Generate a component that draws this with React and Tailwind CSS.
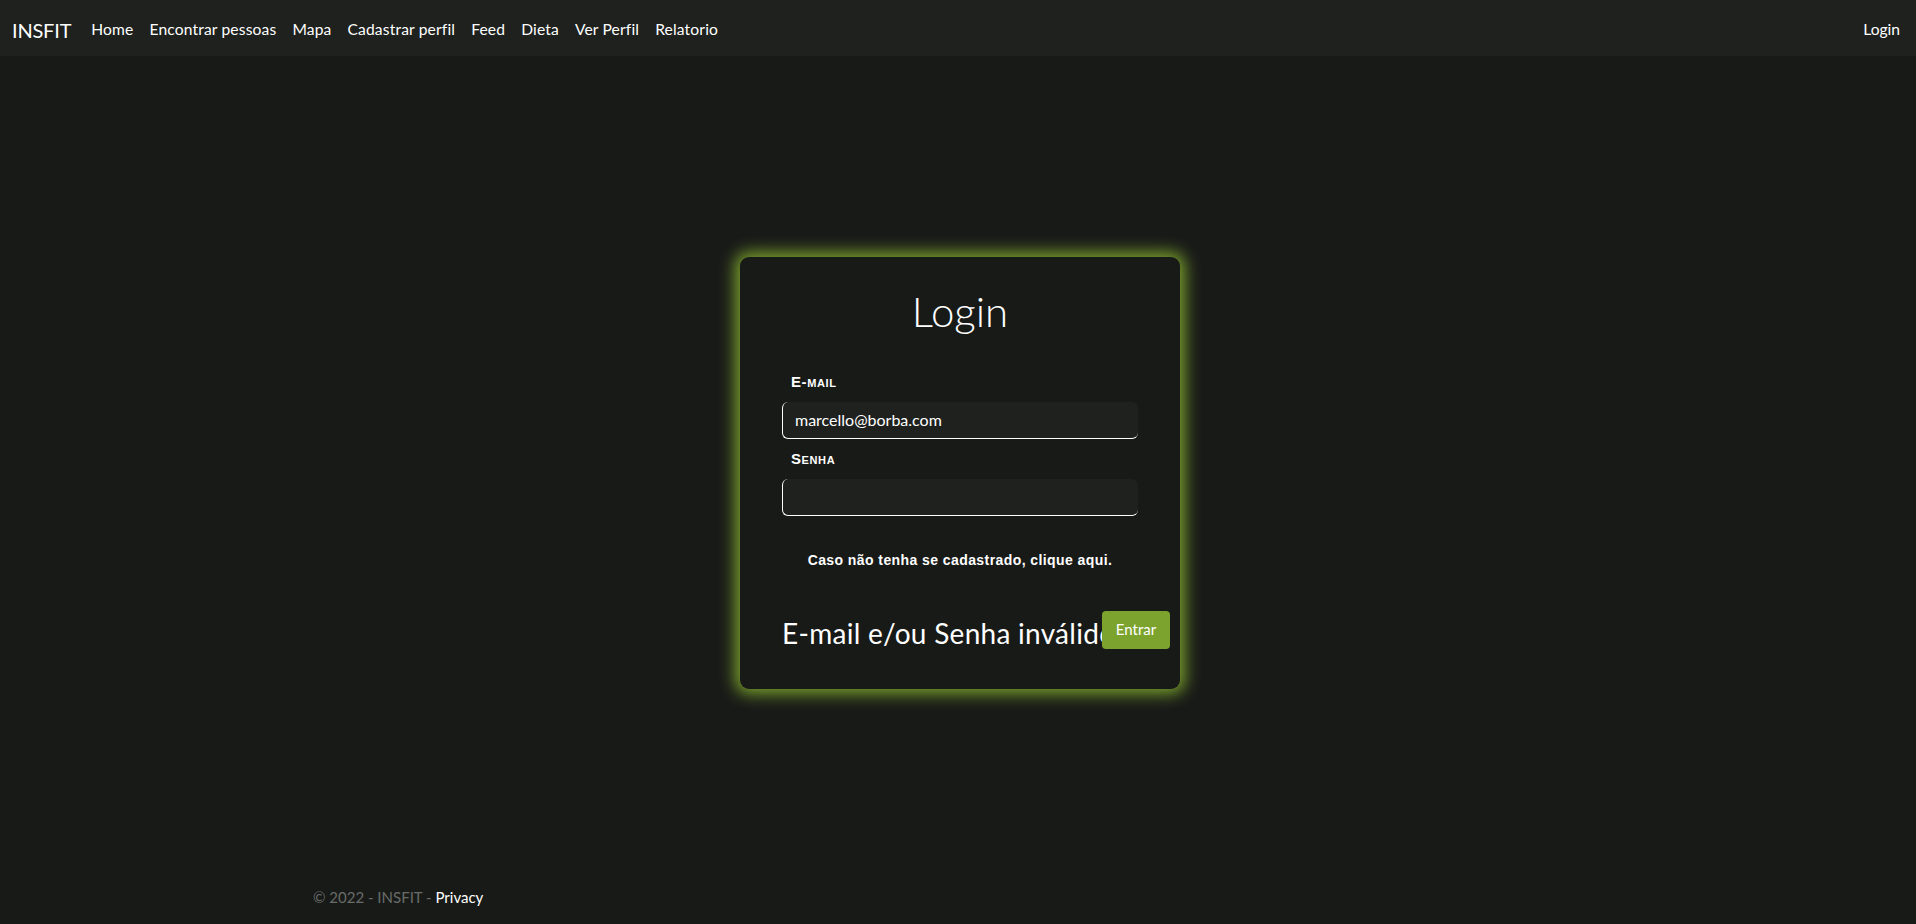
const navLinks = ['Home', 'Encontrar pessoas', 'Mapa', 'Cadastrar perfil', 'Feed', 'Dieta', 'Ver Perfil', 'Relatorio'];

function Field({ label, value }) {
  return (
    <div>
      <label className="block pl-[9px] text-[15px] font-bold [font-variant:small-caps] tracking-[0.04em] text-white leading-[20px] font-['Liberation_Sans',sans-serif]">
        {label}
      </label>
      <div className="mt-[10px] h-[37px] rounded-[6px] border-l border-b border-white bg-[#1e211e] pl-[12px] flex items-center text-[16px] text-white">
        {value}
      </div>
    </div>
  );
}

export default function App() {
  return (
    <div className="min-h-screen flex flex-col bg-[#181a18] text-white font-['Lato','Noto_Sans',sans-serif]">
      <nav className="h-[56px] bg-[#1e211e] flex items-center justify-between pl-[12px] pr-[16px] pt-[3px]">
        <div className="flex items-center">
          <span className="text-[20px] mr-[20px] tracking-[-0.01em]">INSFIT</span>
          <ul className="flex items-center gap-[16px] text-[15.6px] tracking-[0.01em]">
            {navLinks.map((l) => (
              <li key={l}>{l}</li>
            ))}
          </ul>
        </div>
        <span className="text-[15.6px]">Login</span>
      </nav>

      <main className="flex-1 pt-[201px] pl-[4px]">
        <div className="mx-auto w-[440px] h-[432px] rounded-[9px] bg-[#181a18] shadow-[0_0_16px_5px_#7aa02c] px-[42px] pt-[26px]">
          <h1 className="text-center text-[42px] font-light leading-[56px]">Login</h1>
          <div className="mt-[33px] flex flex-col gap-[10px]">
            <Field label="E-mail" value="marcello@borba.com" />
            <Field label="Senha" value="" />
          </div>
          <p className="mt-[34px] text-center text-[14px] font-bold tracking-[0.03em] font-['Liberation_Sans',sans-serif]">
            Caso não tenha se cadastrado, clique aqui.
          </p>
          <div className="mt-[36px] flex items-center">
            <span className="w-[320px] shrink-0 whitespace-nowrap text-[28px] leading-[38px] pt-[7px] tracking-[0.01em]">E-mail e/ou Senha inválido</span>
            <button className="relative z-10 shrink-0 h-[38px] w-[68px] rounded-[4px] bg-[#7da32f] text-[15px] text-white">Entrar</button>
          </div>
        </div>
      </main>

      <footer className="h-[54px] flex items-center">
        <div className="w-[1320px] mx-auto px-[15px] text-[15px] text-[#686c69]">
          © 2022 - INSFIT - <span className="text-white">Privacy</span>
        </div>
      </footer>
    </div>
  );
}
